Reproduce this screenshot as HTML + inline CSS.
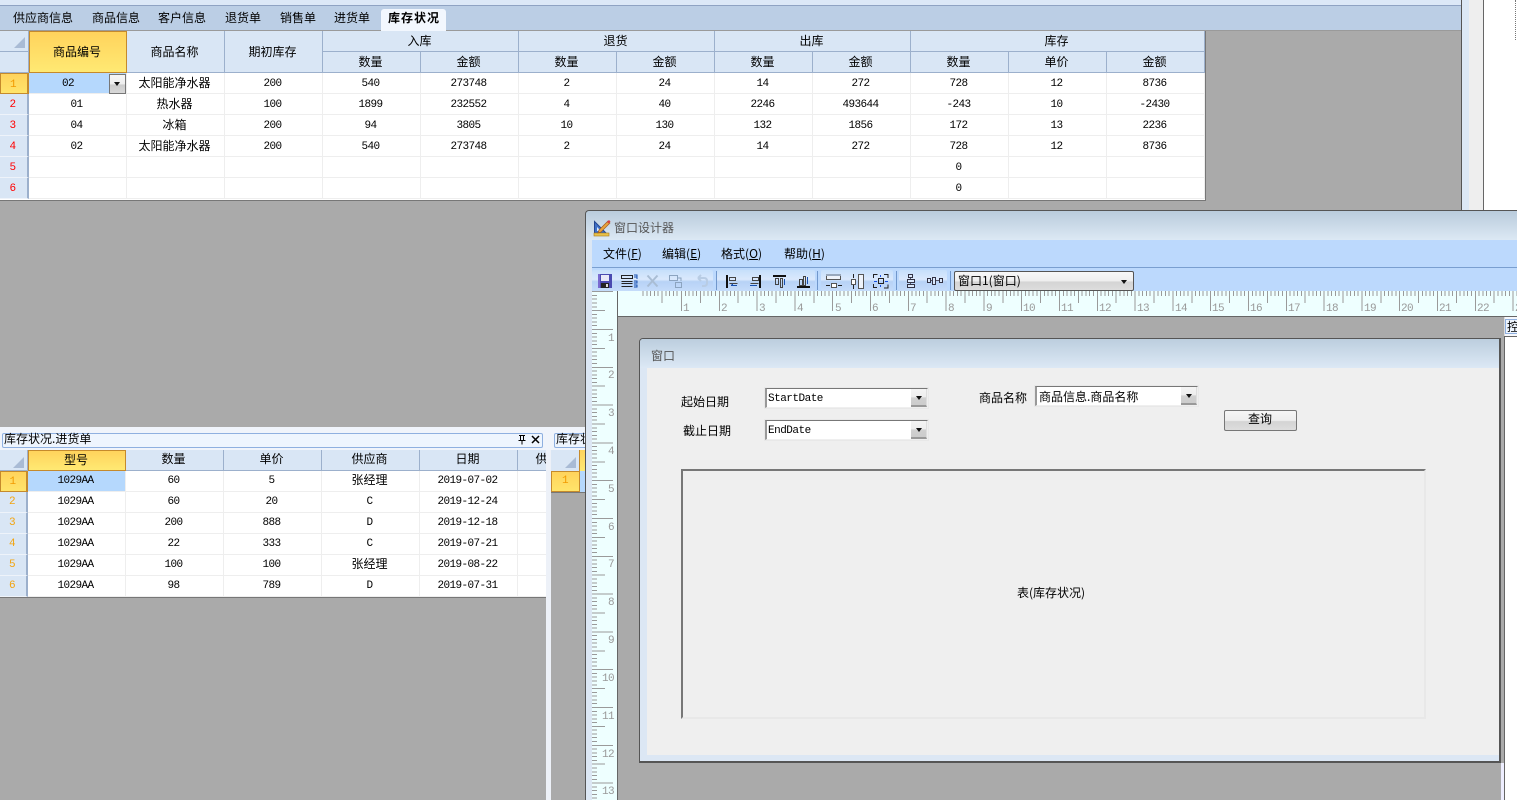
<!DOCTYPE html>
<html><head><meta charset="utf-8"><style>
html,body{margin:0;padding:0;width:1517px;height:800px;overflow:hidden;background:#aaa}
div,span{box-sizing:border-box}
.a{position:absolute}
.t{position:absolute;white-space:nowrap;font:12px/14px "WenQuanYi Zen Hei","Noto Sans CJK SC",sans-serif;color:#000}
.m{font:11px/14px "Liberation Mono",monospace;letter-spacing:-.6px}
table{position:absolute;border-collapse:separate;border-spacing:0;table-layout:fixed}
td{box-sizing:border-box;height:21px;padding:0 2px 0 0;text-align:center;overflow:hidden;white-space:nowrap;font:11px/14px "Liberation Mono",monospace;letter-spacing:-.6px;color:#000;background:#fff;border-right:1px solid #eee;border-bottom:1px solid #eee}
td.c{font:12px/14px "WenQuanYi Zen Hei","Noto Sans CJK SC",sans-serif;letter-spacing:0}
td.h{font:12px/14px "WenQuanYi Zen Hei","Noto Sans CJK SC",sans-serif;letter-spacing:0;background:#d9e6f5;border-right:1px solid #9cb0cc;border-bottom:1px solid #9cb0cc}
td.s{font:12px/14px "WenQuanYi Zen Hei","Noto Sans CJK SC",sans-serif;letter-spacing:0;background:linear-gradient(#ffd35c,#ffe973);border:1px solid #c58a2c}
td.r{background:#d9e6f5;color:#f00;border-right:2px solid #9cb0cc;border-bottom:1px solid #eef3fa;text-align:center;padding-right:2px}
td.ry{background:linear-gradient(#ffd35c,#ffe46a);color:#f29a00;border:1px solid #c58a2c;border-right:2px solid #c58a2c;padding-right:2px}
td.b{background:#b5d8fd}
.g1 td{padding-top:2px}
.g1 td.c,.g1 td.h,.g1 td.s{padding-top:0}
.g2 td.c,.g2 td.h,.g2 td.s{padding-bottom:2px}
.tri{position:absolute;width:0;height:0;border-style:solid;border-width:0 0 11px 11px;border-color:transparent transparent #a9bbd5 transparent}
.cb{position:absolute;background:#fff;border:1px solid #efefef;border-top:1px solid #777;border-left:2px solid #999;outline:1px solid #e8e8e8}
.btn{position:absolute;width:16px;background:linear-gradient(#f4f4f4 0,#eee 50%,#d0d0d0 55%,#ccc 100%);border-bottom:2px solid #999;border-right:1px solid #ddd}
.btn:after{content:"";position:absolute;left:5px;top:7px;border-style:solid;border-width:4px 3px 0 3px;border-color:#111 transparent transparent transparent}
.seg{position:absolute;top:270px;height:21px;background:linear-gradient(#c6dffb,#dbe9fc 45%,#b7d2f6 55%,#c5dcfa);border-radius:2px}
.sep{position:absolute;top:271px;height:19px;width:1px;background:#7097cc}
u{text-decoration:underline}
</style></head><body>

<!-- top tabs -->
<div class="a" style="left:0;top:0;width:1461px;height:5px;background:#dce8f7"></div>
<div class="a" style="left:0;top:5px;width:1461px;height:1px;background:#8fa3c3"></div>
<div class="a" style="left:0;top:6px;width:1461px;height:24px;background:#bbcee5"></div>
<div class="a" style="left:0;top:30px;width:1461px;height:1px;background:#9a9a9a"></div>
<div class="a" style="left:381px;top:9px;width:65px;height:22px;background:#f2f7fe;border-radius:3px 3px 0 0"></div>
<span class="t" style="left:13px;top:11px">供应商信息</span>
<span class="t" style="left:92px;top:11px">商品信息</span>
<span class="t" style="left:158px;top:11px">客户信息</span>
<span class="t" style="left:225px;top:11px">退货单</span>
<span class="t" style="left:280px;top:11px">销售单</span>
<span class="t" style="left:334px;top:11px">进货单</span>
<span class="t" style="left:388px;top:11px;font-weight:bold;letter-spacing:1px">库存状况</span>

<!-- right side -->
<div class="a" style="left:1461px;top:0;width:1px;height:210px;background:#555"></div>
<div class="a" style="left:1462px;top:0;width:7px;height:210px;background:#dce8f5"></div>
<div class="a" style="left:1469px;top:0;width:14px;height:210px;background:#eee"></div>
<div class="a" style="left:1483px;top:0;width:1px;height:210px;background:#666"></div>
<div class="a" style="left:1484px;top:0;width:33px;height:210px;background:#fff"></div>
<div class="a" style="left:1515px;top:0;width:1px;height:40px;border-left:1px dotted #777"></div>

<!-- grid 1 -->
<div class="a" style="left:0;top:31px;width:1206px;height:170px;border-right:1px solid #777;border-bottom:1px solid #777;background:#fff"></div>
<table class="g1" style="left:0;top:31px;width:1205px">
<colgroup><col style="width:29px"><col style="width:98px"><col style="width:98px"><col style="width:98px"><col style="width:98px"><col style="width:98px"><col style="width:98px"><col style="width:98px"><col style="width:98px"><col style="width:98px"><col style="width:98px"><col style="width:98px"><col style="width:98px"></colgroup>
<tr><td class="h"></td><td class="s" rowspan="2">商品编号</td><td class="h" rowspan="2">商品名称</td><td class="h" rowspan="2">期初库存</td><td class="h" colspan="2">入库</td><td class="h" colspan="2">退货</td><td class="h" colspan="2">出库</td><td class="h" colspan="3">库存</td></tr>
<tr><td class="h"></td><td class="h">数量</td><td class="h">金额</td><td class="h">数量</td><td class="h">金额</td><td class="h">数量</td><td class="h">金额</td><td class="h">数量</td><td class="h">单价</td><td class="h">金额</td></tr>
<tr><td class="ry">1</td><td class="b" style="text-align:left;padding-left:33px">02</td><td class="c">太阳能净水器</td><td>200</td><td>540</td><td>273748</td><td>2</td><td>24</td><td>14</td><td>272</td><td>728</td><td>12</td><td>8736</td></tr>
<tr><td class="r">2</td><td>01</td><td class="c">热水器</td><td>100</td><td>1899</td><td>232552</td><td>4</td><td>40</td><td>2246</td><td>493644</td><td>-243</td><td>10</td><td>-2430</td></tr>
<tr><td class="r">3</td><td>04</td><td class="c">冰箱</td><td>200</td><td>94</td><td>3805</td><td>10</td><td>130</td><td>132</td><td>1856</td><td>172</td><td>13</td><td>2236</td></tr>
<tr><td class="r">4</td><td>02</td><td class="c">太阳能净水器</td><td>200</td><td>540</td><td>273748</td><td>2</td><td>24</td><td>14</td><td>272</td><td>728</td><td>12</td><td>8736</td></tr>
<tr><td class="r">5</td><td></td><td></td><td></td><td></td><td></td><td></td><td></td><td></td><td></td><td>0</td><td></td><td></td></tr>
<tr><td class="r">6</td><td></td><td></td><td></td><td></td><td></td><td></td><td></td><td></td><td></td><td>0</td><td></td><td></td></tr>
</table>
<div class="tri" style="left:14px;top:37px"></div>
<div class="a" style="left:109px;top:74px;width:17px;height:20px;border:1px solid #777;background:linear-gradient(#f6f6f6,#eee 50%,#ccc 55%,#d8d8d8)"></div>
<div class="a" style="left:114px;top:82px;border-style:solid;border-width:4px 3.5px 0 3.5px;border-color:#111 transparent transparent transparent"></div>

<!-- lower panel 1 -->
<div class="a" style="left:0;top:427px;width:551px;height:23px;background:#f0f4fb"></div>
<div class="a" style="left:546px;top:450px;width:5px;height:350px;background:#edf1f8"></div>
<div class="a" style="left:2px;top:433px;width:541px;height:15px;background:#eef5fe;border:1px solid #8fb0e0;border-radius:2px"></div>
<span class="t" style="left:4px;top:432px">库存状况.进货单</span>
<svg class="a" style="left:516px;top:434px" width="24" height="12" viewBox="0 0 24 12"><path d="M3 1.500h6M4.500 1.500v5M7.500 1.500v5M2.500 6.500h7M6 6.500v4" stroke="#000" fill="none" shape-rendering="crispEdges"/><path d="M16 2l7 7M23 2l-7 7" stroke="#000" stroke-width="1.500" fill="none"/></svg>
<div class="a" style="left:0;top:450px;width:546px;height:148px;overflow:hidden;background:#fff;border-bottom:1px solid #777">
<table class="g2" style="left:0;top:0;width:616px">
<colgroup><col style="width:28px"><col style="width:98px"><col style="width:98px"><col style="width:98px"><col style="width:98px"><col style="width:98px"><col style="width:98px"></colgroup>
<tr><td class="h"></td><td class="s">型号</td><td class="h">数量</td><td class="h">单价</td><td class="h">供应商</td><td class="h">日期</td><td class="h">供应商信息</td></tr>
<tr><td class="ry">1</td><td class="b">1029AA</td><td>60</td><td>5</td><td class="c">张经理</td><td>2019-07-02</td><td></td></tr>
<tr><td class="r" style="color:#f2a40f">2</td><td>1029AA</td><td>60</td><td>20</td><td>C</td><td>2019-12-24</td><td></td></tr>
<tr><td class="r" style="color:#f2a40f">3</td><td>1029AA</td><td>200</td><td>888</td><td>D</td><td>2019-12-18</td><td></td></tr>
<tr><td class="r" style="color:#f2a40f">4</td><td>1029AA</td><td>22</td><td>333</td><td>C</td><td>2019-07-21</td><td></td></tr>
<tr><td class="r" style="color:#f2a40f">5</td><td>1029AA</td><td>100</td><td>100</td><td class="c">张经理</td><td>2019-08-22</td><td></td></tr>
<tr><td class="r" style="color:#f2a40f">6</td><td>1029AA</td><td>98</td><td>789</td><td>D</td><td>2019-07-31</td><td></td></tr>
</table>
<div class="tri" style="left:13px;top:7px"></div>
</div>

<!-- lower panel 2 -->
<div class="a" style="left:551px;top:427px;width:34px;height:23px;background:#f0f4fb;overflow:hidden">
<div class="a" style="left:3px;top:6px;width:60px;height:15px;background:#eef5fe;border:1px solid #8fb0e0;border-radius:2px"></div>
<span class="t" style="left:5px;top:5px">库存状况</span>
</div>
<div class="a" style="left:551px;top:450px;width:34px;height:21px;background:#d9e6f5;border-right:0">
<div class="a" style="left:28px;top:0;width:6px;height:21px;background:linear-gradient(#ffd35c,#ffe973);border-left:1px solid #c58a2c"></div>
<div class="tri" style="left:14px;top:7px"></div>
</div>
<div class="a" style="left:551px;top:471px;width:29px;height:21px;background:linear-gradient(#ffd35c,#ffe46a);border:1px solid #c58a2c"></div>
<span class="t m" style="left:562px;top:474px;color:#f29a00">1</span>
<div class="a" style="left:580px;top:471px;width:5px;height:21px;background:#b5d8fd"></div>
<div class="a" style="left:551px;top:492px;width:34px;height:1px;background:#777"></div>

<!-- designer window -->
<div class="a" style="left:585px;top:210px;width:932px;height:590px;background:#aaa;border-left:1px solid #555;border-top:1px solid #555;border-radius:4px 0 0 0;overflow:hidden"></div>
<div class="a" style="left:586px;top:211px;width:931px;height:29px;background:linear-gradient(#b9cbdc,#dce8f4);border-radius:3px 0 0 0"></div>
<div class="a" style="left:586px;top:240px;width:6px;height:560px;background:#dce7f4"></div>
<svg class="a" style="left:593px;top:219px" width="18" height="18" viewBox="0 0 18 18"><path d="M1.500 2.500v11.500h11.500z" fill="#3f70c8" stroke="#24468f"/><path d="M4 8v4h4z" fill="#dce8f7"/><rect x="1" y="14" width="15" height="3" fill="#e8c14a" stroke="#a87a1a" stroke-width=".6"/><path d="M6 11l9-9 2 2-9 9-3 1z" fill="#e8a33a" stroke="#a05a20" stroke-width=".7"/><path d="M14 3l2-2 1.500 1.500-2 2z" fill="#d84040"/></svg>
<span class="t" style="left:614px;top:221px;color:#555">窗口设计器</span>

<!-- menu -->
<div class="a" style="left:592px;top:240px;width:925px;height:28px;background:#bcd9fd;border-bottom:1px solid #7a9fd0"></div>
<span class="t" style="left:603px;top:247px">文件(<u>F</u>)</span>
<span class="t" style="left:662px;top:247px">编辑(<u>E</u>)</span>
<span class="t" style="left:721px;top:247px">格式(<u>O</u>)</span>
<span class="t" style="left:784px;top:247px">帮助(<u>H</u>)</span>

<!-- toolbar -->
<div class="a" style="left:592px;top:268px;width:925px;height:23px;background:#bcd9fd"></div>
<div class="seg" style="left:592px;width:121px"></div>
<div class="seg" style="left:717px;width:98px"></div>
<div class="seg" style="left:821px;width:72px"></div>
<div class="seg" style="left:899px;width:48px"></div>
<div class="sep" style="left:716px"></div><div class="sep" style="left:817px"></div><div class="sep" style="left:896px"></div><div class="sep" style="left:950px"></div>
<svg class="a" style="left:590px;top:268px" width="370" height="24" viewBox="590 268 370 24" fill="none" shape-rendering="crispEdges">
<rect x="598" y="274" width="14" height="14" fill="#4a4ab0"/><rect x="601" y="275" width="8" height="6" fill="#e8e8f8"/><rect x="601" y="283" width="8" height="5" fill="#222"/><rect x="606" y="284" width="2" height="3" fill="#ddd"/><rect x="598" y="274" width="2" height="14" fill="#7a6ad0"/>
<path d="M621.500 275.500h11v3h-11zM621.500 281.500h11M621.500 283.500h11M621.500 286.500h11" stroke="#222"/><path d="M634 275h3v2h-3M637 277v2M634 281h3v2h-3M634 285h3v2h-3" stroke="#1850b0"/>
<path d="M647.500 275.500l10 11M657.500 275.500l-10 11" stroke="#a9bdd4" stroke-width="2" shape-rendering="auto"/>
<path d="M669.500 275.500h8v5h-8zM675.500 282.500h6v5h-6zM678 278h3v3" stroke="#8ca4c0"/>
<path d="M698 278h6q3 0 3 3v2q0 3-3 3h-2M698 278l3-3M698 278l3 3" stroke="#b8cce4" stroke-width="2" shape-rendering="auto"/>
<rect x="726" y="275" width="2" height="13" fill="#111"/><path d="M729.500 277.500h6v3h-6zM729.500 283.500h8" stroke="#444"/><path d="M731 285.500h6M731 285.500l2-1.500" stroke="#1850b0"/>
<rect x="759" y="275" width="2" height="13" fill="#111"/><path d="M752.500 277.500h6v3h-6zM750.500 283.500h8" stroke="#444"/><path d="M750 285.500h7" stroke="#1850b0"/>
<rect x="773" y="275" width="13" height="2" fill="#111"/><path d="M775.500 278.500h3v6h-3zM780.500 278.500h2v9h-2z" stroke="#444"/><path d="M784.500 279v6" stroke="#1850b0"/>
<rect x="797" y="286" width="13" height="2" fill="#111"/><path d="M799.500 279.500h3v6h-3zM803.500 276.500h2v9h-2z" stroke="#444"/><path d="M807.500 277v7" stroke="#1850b0"/>
<rect x="826.500" y="274.500" width="14" height="5" fill="#eef3fa" stroke="#555"/><rect x="826" y="274" width="15" height="2" fill="#98a8bc"/><rect x="831.500" y="283.500" width="5" height="4" fill="#fff" stroke="#555"/><path d="M826 285.500h4M838 285.500h4" stroke="#222"/>
<rect x="858.500" y="274.500" width="5" height="14" fill="#eef3fa" stroke="#555"/><rect x="851.500" y="279.500" width="4" height="5" fill="#fff" stroke="#555"/><path d="M853.500 274v4M853.500 285v4" stroke="#222"/>
<path d="M873.500 278v-3.500h4M884 274.500h4v3.500M888 284.500v3.500h-4M877 287.500h-3.500v-3.500" stroke="#222"/><rect x="878.500" y="278.500" width="5" height="5" stroke="#222"/><path d="M880.500 275v2M880.500 285v2M874 281.500h3M885 281.500h3" stroke="#1850e0"/>
<path d="M910.500 274v14" stroke="#556"/><rect x="908.500" y="274.500" width="4" height="3" fill="#dbe9fc" stroke="#334"/><rect x="907.500" y="279.500" width="7" height="3" fill="#dbe9fc" stroke="#334"/><rect x="907.500" y="284.500" width="7" height="3" fill="#dbe9fc" stroke="#334"/>
<path d="M927 280.500h16" stroke="#556"/><rect x="927.500" y="278.500" width="3" height="4" fill="#dbe9fc" stroke="#334"/><rect x="932.500" y="277.500" width="3" height="7" fill="#dbe9fc" stroke="#334"/><rect x="939.500" y="278.500" width="3" height="4" fill="#dbe9fc" stroke="#334"/>
</svg>
<div class="a" style="left:954px;top:271px;width:180px;height:20px;border:1px solid #555;border-radius:2px;background:linear-gradient(#f8f8f8,#efefef 50%,#d4d4d4 55%,#ddd)"></div>
<span class="t" style="left:958px;top:274px">窗口1(窗口)</span>
<div class="a" style="left:1121px;top:280px;border-style:solid;border-width:4px 3.500px 0 3.500px;border-color:#111 transparent transparent transparent"></div>

<!-- rulers -->
<svg class="a" style="left:592px;top:291px" width="925" height="25" viewBox="592 291 925 25" shape-rendering="crispEdges">
<rect x="592" y="291" width="925" height="25" fill="#eeffff"/>
<defs><g id="hc" stroke="#9a9a9a" fill="none"><path d="M0.500 0v20M4.300 0v5M8 0v5M11.800 0v5M15.600 0v5M19.400 0v12M23.200 0v5M27 0v5M30.700 0v5M34.500 0v5"/></g>
<g id="vc" stroke="#9a9a9a" fill="none"><path d="M0 .5h21M0 4.300h5M0 8h5M0 11.800h5M0 15.600h5M0 19.400h13M0 23.200h5M0 27h5M0 30.700h5M0 34.500h5"/></g></defs>
<path d="M643 291v5M646.800 291v5M650.500 291v5M654.300 291v5M658 291v5M662 291v12M665.800 291v5M669.500 291v5M673.300 291v5M677 291v5" stroke="#9a9a9a"/>
<use href="#hc" x="681" y="291"/><use href="#hc" x="718.800" y="291"/><use href="#hc" x="756.600" y="291"/><use href="#hc" x="794.400" y="291"/><use href="#hc" x="832.200" y="291"/><use href="#hc" x="870" y="291"/><use href="#hc" x="907.800" y="291"/><use href="#hc" x="945.600" y="291"/><use href="#hc" x="983.400" y="291"/><use href="#hc" x="1021.200" y="291"/><use href="#hc" x="1059" y="291"/><use href="#hc" x="1096.800" y="291"/><use href="#hc" x="1134.600" y="291"/><use href="#hc" x="1172.400" y="291"/><use href="#hc" x="1210.200" y="291"/><use href="#hc" x="1248" y="291"/><use href="#hc" x="1285.800" y="291"/><use href="#hc" x="1323.600" y="291"/><use href="#hc" x="1361.400" y="291"/><use href="#hc" x="1399.200" y="291"/><use href="#hc" x="1437" y="291"/><use href="#hc" x="1474.800" y="291"/><use href="#hc" x="1512.600" y="291"/>
<g font-family="Liberation Mono" font-size="11" fill="#999" letter-spacing="-.6" shape-rendering="auto">
<text x="683" y="311">1</text><text x="721" y="311">2</text><text x="759" y="311">3</text><text x="797" y="311">4</text><text x="835" y="311">5</text><text x="872" y="311">6</text><text x="910" y="311">7</text><text x="948" y="311">8</text><text x="986" y="311">9</text><text x="1023" y="311">10</text><text x="1061" y="311">11</text><text x="1099" y="311">12</text><text x="1137" y="311">13</text><text x="1175" y="311">14</text><text x="1212" y="311">15</text><text x="1250" y="311">16</text><text x="1288" y="311">17</text><text x="1326" y="311">18</text><text x="1364" y="311">19</text><text x="1401" y="311">20</text><text x="1439" y="311">21</text><text x="1477" y="311">22</text><text x="1515" y="311">23</text>
</g>
</svg>
<div class="a" style="left:592px;top:316px;width:925px;height:484px;background:#aaa"></div>
<svg class="a" style="left:592px;top:291px" width="26" height="509" viewBox="592 291 26 509" shape-rendering="crispEdges">
<rect x="592" y="291" width="25" height="509" fill="#eeffff"/>
<rect x="617" y="291" width="1" height="509" fill="#666"/>
<use href="#vc" x="592" y="291.200"/><use href="#vc" x="592" y="329"/><use href="#vc" x="592" y="366.800"/><use href="#vc" x="592" y="404.600"/><use href="#vc" x="592" y="442.400"/><use href="#vc" x="592" y="480.200"/><use href="#vc" x="592" y="518"/><use href="#vc" x="592" y="555.800"/><use href="#vc" x="592" y="593.600"/><use href="#vc" x="592" y="631.400"/><use href="#vc" x="592" y="669.200"/><use href="#vc" x="592" y="707"/><use href="#vc" x="592" y="744.800"/><use href="#vc" x="592" y="782.600"/>
<g font-family="Liberation Mono" font-size="11" fill="#999" letter-spacing="-.6" text-anchor="end" shape-rendering="auto">
<text x="614" y="341">1</text><text x="614" y="378">2</text><text x="614" y="416">3</text><text x="614" y="454">4</text><text x="614" y="492">5</text><text x="614" y="530">6</text><text x="614" y="567">7</text><text x="614" y="605">8</text><text x="614" y="643">9</text><text x="614" y="681">10</text><text x="614" y="719">11</text><text x="614" y="757">12</text><text x="614" y="794">13</text>
</g>
</svg>
<div class="a" style="left:618px;top:316px;width:899px;height:1px;background:#666"></div>

<!-- right control panel -->
<div class="a" style="left:1501px;top:317px;width:3px;height:483px;background:#aaa"></div>
<div class="a" style="left:1501px;top:763px;width:3px;height:37px;background:#eef"></div>
<div class="a" style="left:1504px;top:317px;width:13px;height:483px;background:#f6f8fc;border-left:1px solid #ddd"></div>
<div class="a" style="left:1505px;top:319px;width:12px;height:15px;background:#eef5fe;border:1px solid #8fb0e0;border-right:0;overflow:hidden"><span class="t" style="left:1px;top:0">控</span></div>
<div class="a" style="left:1504px;top:336px;width:13px;height:464px;background:#fff;border-left:1px solid #666;border-top:1px solid #666"></div>

<!-- inner window -->
<div class="a" style="left:639px;top:338px;width:862px;height:425px;background:#dce7f4;border:1px solid #555;border-width:1px 2px 2px 1px;border-radius:4px 0 0 0"></div>
<div class="a" style="left:640px;top:339px;width:859px;height:29px;background:linear-gradient(#bccede,#dce8f5);border-radius:3px 0 0 0"></div>
<div class="a" style="left:647px;top:368px;width:852px;height:387px;background:#efefef"></div>
<span class="t" style="left:651px;top:349px;color:#555">窗口</span>

<span class="t" style="left:681px;top:395px">起始日期</span>
<span class="t" style="left:683px;top:424px">截止日期</span>
<div class="cb" style="left:765px;top:388px;width:163px;height:20px"></div>
<span class="t m" style="left:768px;top:392px;letter-spacing:-.5px">StartDate</span>
<div class="btn" style="left:911px;top:389px;height:18px"></div>
<div class="cb" style="left:765px;top:420px;width:163px;height:20px"></div>
<span class="t m" style="left:768px;top:424px;letter-spacing:-.5px">EndDate</span>
<div class="btn" style="left:911px;top:421px;height:18px"></div>

<span class="t" style="left:979px;top:391px">商品名称</span>
<div class="cb" style="left:1035px;top:386px;width:163px;height:20px"></div>
<span class="t" style="left:1039px;top:390px">商品信息.商品名称</span>
<div class="btn" style="left:1181px;top:387px;height:18px"></div>

<div class="a" style="left:1224px;top:410px;width:73px;height:21px;border:1px solid #777;border-radius:2px;background:linear-gradient(#f6f6f6,#eee 50%,#d4d4d4 55%,#ddd)"></div>
<span class="t" style="left:1248px;top:412px">查询</span>

<div class="a" style="left:681px;top:469px;width:745px;height:250px;border:2px solid #e8e8e8;border-top:2px solid #777;border-left:2px solid #777;background:#efefef"></div>
<span class="t" style="left:1017px;top:586px">表(库存状况)</span>
</body></html>
